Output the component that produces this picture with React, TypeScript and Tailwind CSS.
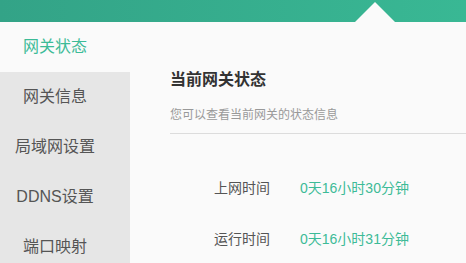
const menu = ["网关信息", "局域网设置", "DDNS设置", "端口映射"];

const rows = [
  { label: "上网时间", value: "0天16小时30分钟" },
  { label: "运行时间", value: "0天16小时31分钟" },
];

export default function App() {
  return (
    <div
      className="w-[466px] h-[263px] overflow-hidden bg-[#fafafa] flex flex-col"
      style={{ fontFamily: '"Liberation Sans", "Noto Sans CJK SC", sans-serif' }}
    >
      {/* Top bar */}
      <div className="relative h-[22px] shrink-0 bg-gradient-to-r from-[#33a387] to-[#39b894]">
        <div className="absolute left-[355px] top-[2px] w-0 h-0 border-l-[20px] border-r-[20px] border-b-[20px] border-l-transparent border-r-transparent border-b-[#fafafa]" />
      </div>

      <div className="flex flex-1">
        {/* Sidebar */}
        <div className="w-[130px] shrink-0 flex flex-col">
          <div className="h-[50px] w-[110px] flex items-center justify-center text-[16px] text-[#3dbb97]">
            网关状态
          </div>
          <div className="flex-1 bg-[#e6e6e6] flex flex-col">
            {menu.map((m) => (
              <div key={m} className="h-[50px] w-[110px] flex items-center justify-center text-[16px] text-[#555]">
                {m}
              </div>
            ))}
          </div>
        </div>

        {/* Content */}
        <div className="flex-1 pl-[40px] pt-[46px]">
          <div className="text-[16px] font-bold text-[#333] leading-[24px]">当前网关状态</div>
          <div className="mt-[15px] text-[12px] text-[#999] leading-[16px]">您可以查看当前网关的状态信息</div>
          <div className="mt-[10px] h-px bg-[#dcdcdc]" />
          <div className="mt-[44px] flex flex-col gap-[31px]">
            {rows.map((r) => (
              <div key={r.label} className="flex items-center text-[14px] leading-[20px]">
                <span className="w-[100px] text-right text-[#555]">{r.label}</span>
                <span className="ml-[30px] text-[#3dbb97]">{r.value}</span>
              </div>
            ))}
          </div>
        </div>
      </div>
    </div>
  );
}
